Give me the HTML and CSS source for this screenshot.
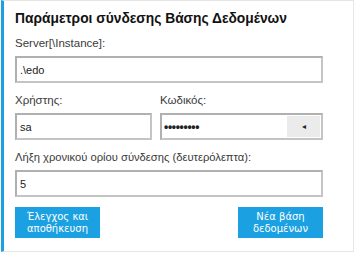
FILE: index.html
```html
<!DOCTYPE html>
<html lang="el">
<head>
    <meta charset="UTF-8">
    <title>Παράμετροι σύνδεσης</title>
    <link rel="stylesheet" href="styles.css">
</head>
<body>
    <section class="panel">
        <h2 class="panelTitle">Παράμετροι σύνδεσης Βάσης Δεδομένων</h2>

        <div class="field">
            <label for="server">Server[\Instance]:</label>
            <input type="text" id="server" value=".\edo">
        </div>

        <div class="fieldRow">
            <div class="field">
                <label for="user">Χρήστης:</label>
                <input type="text" id="user" value="sa">
            </div>
            <div class="field">
                <label for="pass">Κωδικός:</label>
                <div class="passBox">
                    <span class="dots">•••••••••</span>
                    <span class="revealBtn">&#9666;</span>
                </div>
            </div>
        </div>

        <div class="field">
            <label for="timeout" class="longLabel">Λήξη χρονικού ορίου σύνδεσης (δευτερόλεπτα):</label>
            <input type="text" id="timeout" value="5">
        </div>

        <div class="actions">
            <button class="btn">Έλεγχος και<br>αποθήκευση</button>
            <button class="btn">Νέα βάση<br>δεδομένων</button>
        </div>
    </section>
</body>
</html>
```

FILE: styles.css
```css
* {
    margin: 0;
    padding: 0;
    box-sizing: border-box;
}

body {
    background-color: #fff;
    font-family: 'Liberation Sans', Arial, sans-serif;
    color: #3a3a3a;
}

.panel {
    width: 353px;
    height: 252px;
    margin-left: 1px;
    border-top: 1px solid #e6e6e6;
    border-right: 1px solid #e6e6e6;
    border-bottom: 1px solid #e6e6e6;
    border-left: 3px solid #1ba1e2;
    padding: 10px 30px 0 11px;
}

.panelTitle {
    font-family: 'Liberation Sans', Arial, sans-serif;
    font-size: 13.8px;
    font-weight: bold;
    color: #111;
    line-height: 16px;
    margin-bottom: 9px;
}

.field {
    margin-bottom: 10px;
}

label {
    display: block;
    font-size: 11.5px;
    line-height: 14px;
    margin-bottom: 6px;
}

/* Greek text in the original font runs narrower */
.longLabel {
    font-size: 11.2px;
}

input[type="text"],
.passBox {
    display: block;
    width: 100%;
    height: 27px;
    border: 2px solid #c4c4c4;
    border-top-color: #b0b0b0;
    border-left-color: #b0b0b0;
    padding: 0 3px;
    font-family: 'Liberation Sans', Arial, sans-serif;
    font-size: 11px;
    color: #222;
    background: #fff;
}

.fieldRow {
    display: grid;
    grid-template-columns: 137px 1fr;
    gap: 8px;
}

.passBox {
    display: flex;
    align-items: center;
    justify-content: space-between;
    padding: 1px 1px 1px 2px;
}

.dots {
    font-size: 12px;
    font-weight: bold;
    letter-spacing: -0.3px;
    color: #222;
}

.revealBtn {
    align-self: stretch;
    width: 33px;
    background: #ebebeb;
    font-size: 8px;
    color: #222;
    display: flex;
    align-items: center;
    justify-content: center;
}

.actions {
    display: flex;
    justify-content: space-between;
    margin-top: 4px;
}

.btn {
    width: 85px;
    height: 31px;
    border: none;
    background-color: #1ba1e2;
    color: #fff;
    font-family: 'DejaVu Sans', sans-serif;
    font-size: 10px;
    line-height: 12px;
}
```
